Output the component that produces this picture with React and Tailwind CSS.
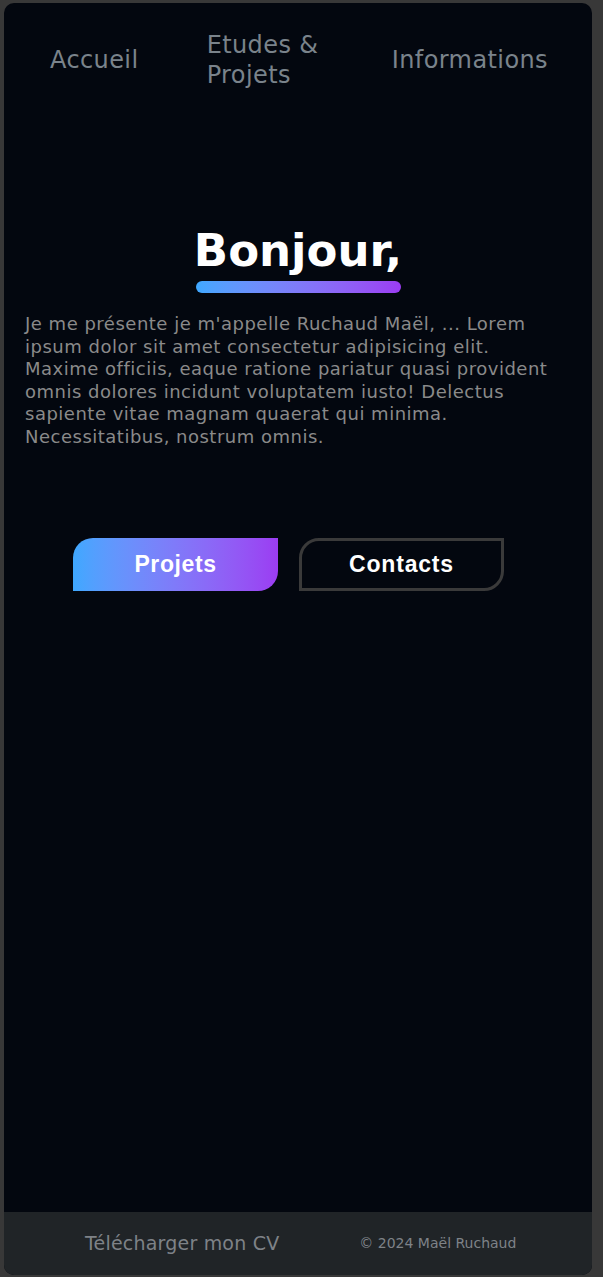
export default function App() {
  const mont = { fontFamily: '"DejaVu Sans", "Noto Sans", sans-serif' };
  return (
    <div className="min-h-[1277px] bg-[#383838] pt-[3px] pl-[4px] pr-[11px] pb-[2px]" style={mont}>
      <div className="flex min-h-[1272px] flex-col overflow-hidden rounded-[10px] bg-[#03070f]">
        <nav className="flex items-center justify-between pl-[46px] pr-[44px] pt-[27px] text-[24px] leading-[30px] tracking-[0.4px] text-[#7a838b]">
          <a>Accueil</a>
          <a className="ml-[3px] w-[120px]">Etudes &amp; Projets</a>
          <a>Informations</a>
        </nav>
        <main className="flex flex-1 flex-col items-center px-[21px] pt-[135px]">
          <div className="flex flex-col items-center">
            <h1 className="text-[45px] font-bold leading-[52px] text-white">Bonjour,</h1>
            <div className="mt-[4px] h-[12px] w-[205px] rounded-full bg-gradient-to-r from-[#3ea8ff] to-[#9b3cf2]" />
          </div>
          <p className="mt-[20px] w-[560px] self-start text-[18px] leading-[22.6px] tracking-[0.5px] text-[#8a8a8a]">
            Je me présente je m'appelle Ruchaud Maël, ... Lorem<br />
            ipsum dolor sit amet consectetur adipisicing elit.<br />
            Maxime officiis, eaque ratione pariatur quasi provident<br />
            omnis dolores incidunt voluptatem iusto! Delectus<br />
            sapiente vitae magnam quaerat qui minima.<br />
            Necessitatibus, nostrum omnis.
          </p>
          <div className="ml-[48px] mt-[89px] flex gap-[21px] self-start" style={{ fontFamily: '"Liberation Sans", Arial, sans-serif' }}>
            <button className="flex h-[53px] w-[205px] items-center justify-center rounded-tl-[20px] rounded-br-[20px] bg-gradient-to-r from-[#3ea8ff] to-[#9b3cf2] text-[23px] font-black tracking-[0.6px] text-white">
              Projets
            </button>
            <button className="flex h-[53px] w-[205px] items-center justify-center rounded-tl-[20px] rounded-br-[20px] border-[3px] border-[#3a3a3a] text-[23px] font-black tracking-[0.8px] text-white">
              Contacts
            </button>
          </div>
        </main>
        <footer className="flex h-[63px] items-center bg-[#202427] text-[#7e8287]">
          <span className="ml-[81px] text-[19px] tracking-[0.2px]">Télécharger mon CV</span>
          <span className="ml-[80px] text-[14px]">© 2024 Maël Ruchaud</span>
        </footer>
      </div>
    </div>
  );
}
